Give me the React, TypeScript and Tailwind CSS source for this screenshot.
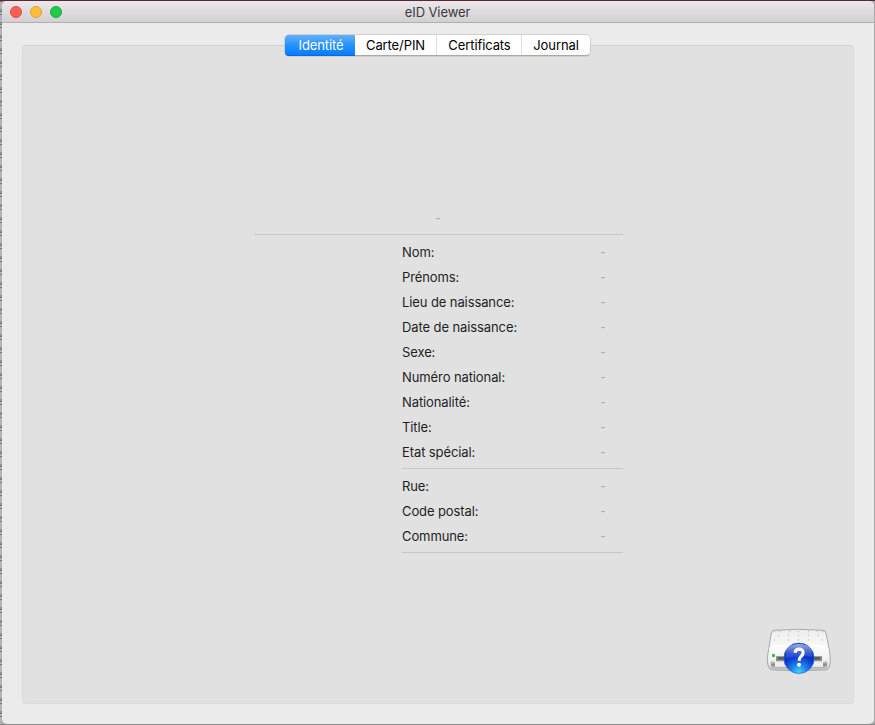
import React from "react";

const identity = [
  "Nom:",
  "Prénoms:",
  "Lieu de naissance:",
  "Date de naissance:",
  "Sexe:",
  "Numéro national:",
  "Nationalité:",
  "Title:",
  "Etat spécial:",
];
const address = ["Rue:", "Code postal:", "Commune:"];

function Row({ label }: { label: string }) {
  return (
    <div className="flex h-[25px] items-center justify-between pr-[17px]">
      <span>{label}</span>
      <Dash />
    </div>
  );
}

function Dash() {
  return <span className="w-[6px] text-center text-[11px] font-semibold leading-none text-[#adadad]">-</span>;
}

function TitleBar() {
  return (
    <header className="flex h-[22px] shrink-0 items-center border-b border-[#b0aeb0] bg-linear-to-b from-[#ebe7eb] to-[#d2d0d2] pl-2">
      <div className="flex w-[120px] gap-2">
        <i className="size-3 rounded-full border border-[#e2463f] bg-[#ff5f57]" />
        <i className="size-3 rounded-full border border-[#e0a02f] bg-[#ffbd3e]" />
        <i className="size-3 rounded-full border border-[#18a938] bg-[#22ca4c]" />
      </div>
      <h1 className="mr-[129px] flex-1 pt-0.5 text-center text-[13px] tracking-[-0.1px] text-[#3c3a3c]">eID Viewer</h1>
    </header>
  );
}

function Tabs() {
  return (
    <nav className="ml-[262px] flex h-[21px] w-[305px] rounded-[4px] border-b border-[#a9a9a9] bg-white text-center text-[13px] leading-[21px] tracking-[-0.1px] text-black shadow-[0_0_0_0.5px_#b8b8b8]">
      <span className="-mb-px w-[70px] rounded-l-[4px] border-b border-[#0868e0] bg-linear-to-b from-[#62b0fa] via-[#2593fc] to-[#087aff] pl-0.5 text-white">Identité</span>
      <span className="w-[82px] border-r border-[#dedede]">Carte/PIN</span>
      <span className="w-[85px] border-r border-[#dedede] pl-px">Certificats</span>
      <span className="w-[68px]">Journal</span>
    </nav>
  );
}

function CardReader() {
  const dotRows = [
    { y: 3.5, xs: [8.5, 13.5, 23.5, 32.5, 42.5, 51.5, 57] },
    { y: 7.5, xs: [12.5, 22.5, 32.5, 42.5, 52.5] },
    { y: 12, xs: [8.5, 22.5, 32.5, 42.5, 56] },
  ];
  return (
    <svg width="66" height="48" viewBox="0 0 66 48">
      <defs>
        <linearGradient id="shell" x2="0" y2="1">
          <stop stopColor="#ededed" />
          <stop offset=".5" stopColor="#fbfbfb" />
          <stop offset=".8" stopColor="#ececec" />
          <stop offset="1" stopColor="#c4c4c4" />
        </linearGradient>
        <linearGradient id="slot" x2="0" y2="1">
          <stop stopColor="#bcbcbc" />
          <stop offset=".35" stopColor="#4a4a4a" />
          <stop offset=".6" stopColor="#666" />
          <stop offset="1" stopColor="#bbb" />
        </linearGradient>
        <linearGradient id="foot" x2="0" y2="1">
          <stop stopColor="#e3e3e3" />
          <stop offset=".5" stopColor="#8c8c8c" />
          <stop offset="1" stopColor="#c6c6c6" />
        </linearGradient>
        <radialGradient id="ball" cx=".5" cy=".97" r=".95">
          <stop stopColor="#4fd5ff" />
          <stop offset=".28" stopColor="#1b84ec" />
          <stop offset=".58" stopColor="#0b35cc" />
          <stop offset="1" stopColor="#0824ad" />
        </radialGradient>
        <linearGradient id="gloss" x2="0" y2="1">
          <stop stopColor="#fff" stopOpacity=".62" />
          <stop offset="1" stopColor="#6b8ff0" stopOpacity=".15" />
        </linearGradient>
      </defs>
      <path d="M8 2.3Q33 .3 57 2.3Q59.8 2.6 60.2 6L63 20Q64.3 26 64.3 32Q64.3 41 60 41.8Q33 44 6 41.8Q1.5 41 1.4 32Q1.5 26 3 20L5 6Q5.5 2.6 8 2.3Z" fill="url(#shell)" stroke="#a0a0a0" strokeWidth=".9" />
      <path d="M3.6 21Q10 17.8 17 17.5H49Q56 17.8 62 21" fill="none" stroke="#fff" strokeWidth="2" opacity=".8" />
      {dotRows.map((row) =>
        row.xs.map((x) => <circle key={`${row.y}-${x}`} cx={x} cy={row.y} r=".75" fill="#c2c2c2" />),
      )}
      <path d="M10 28H56V33.5H10Z" fill="url(#slot)" />
      <path d="M10 29V32.5H12V29ZM54 29V32.5H56V29Z" fill="#888" />
      <path d="M9 34H57V38.5H9Z" fill="#ededed" />
      <path d="M9 39H57V40.5H9Z" fill="#b3b3b3" />
      <path d="M4.5 32.5L9 34V40.5L5.5 40ZM61.5 32.5L57 34V40.5L60.5 40Z" fill="url(#foot)" />
      <rect x="6" y="26" width="3" height="3" rx=".7" fill="#35b93c" />
      <circle cx="33" cy="30.3" r="15.2" fill="url(#ball)" stroke="#2672d0" strokeWidth=".8" />
      <path d="M19.5 29Q19 16.5 33 16Q47 16.5 46.5 29Q33 26.5 19.5 31Z" fill="url(#gloss)" />
      <path d="M29 24.8Q29.6 21 33.3 21.1Q37.2 21.2 37.1 24.6Q37 26.9 34.8 28.6Q33.2 29.9 33.2 32.8" fill="none" stroke="#fff" strokeWidth="3.1" />
      <circle cx="33" cy="36.8" r="2" fill="#fff" />
    </svg>
  );
}

export default function App() {
  return (
    <div className="h-[725px] w-[875px] overflow-hidden bg-[#a9a9ab] font-['Inter','Liberation_Sans',sans-serif] text-[13px]">
      <div className="h-px bg-[#572a32]" />
      <div className="flex h-[723px]">
        <div className="w-0.5 bg-[repeating-linear-gradient(to_bottom,#777_0px,#777_1px,#b3b3b5_1px,#b3b3b5_8px,#9a8f88_8px,#8b929b_10px,#777_10px,#777_11px,#b3b3b5_11px,#b3b3b5_13px)]" />
        <main className="flex w-[872px] flex-col overflow-hidden rounded-[5px] bg-[#ebebeb]">
          <TitleBar />
          <section className="mx-5 mt-[22px] h-[659px] rounded-[4px] border border-[#dcdcdc] border-t-[#d0d0d0] bg-[#e1e1e1]">
            <div className="-mt-[11px]">
              <Tabs />
            </div>
            <div className="ml-[231px] mt-[154px] w-[369px] tracking-[-0.1px] text-[#1f1f1f]">
              <div className="flex h-6 items-start justify-center pt-[3px] pr-px"><Dash /></div>
              <div className="h-px bg-[#c6c6c6]" />
              <div className="ml-[148px] pt-[5px]">
                {identity.map((label) => <Row key={label} label={label} />)}
                <div className="mt-[3px] h-px bg-[#c6c6c6]" />
                <div className="pt-[5px]">
                  {address.map((label) => <Row key={label} label={label} />)}
                </div>
                <div className="mt-[3px] h-px bg-[#c6c6c6]" />
              </div>
            </div>
            <div className="mr-[21px] mt-[75px] flex justify-end"><CardReader /></div>
          </section>
        </main>
      </div>
      <div className="h-px bg-[#8a8a8a]" />
    </div>
  );
}
